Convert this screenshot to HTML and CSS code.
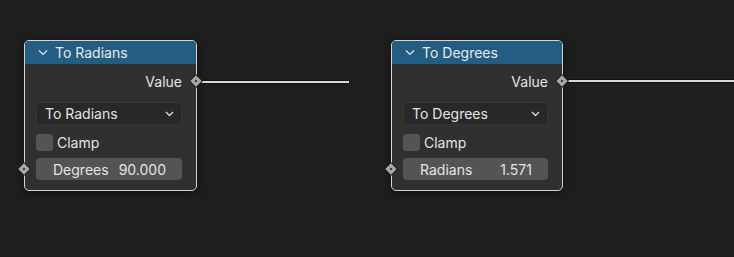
FILE: index.html
```html
<!DOCTYPE html>
<html lang="en">
<head>
    <meta charset="UTF-8">
    <title>Node Editor</title>
    <link rel="stylesheet" href="styles.css">
</head>
<body>
    <div class="canvas">
        <div class="wire wire-a"></div>
        <div class="wire wire-b"></div>

        <div class="node node-a">
            <div class="node-header">
                <svg class="chev" width="10" height="7" viewBox="0 0 10 7"><path d="M1 1.5 L5 5.5 L9 1.5" fill="none" stroke="#e6e6e6" stroke-width="1.2"/></svg>
                <span>To Radians</span>
            </div>
            <div class="node-body">
                <div class="out-row">Value<span class="socket out"></span></div>
                <div class="dropdown">
                    <span>To Radians</span>
                    <svg width="9" height="6" viewBox="0 0 9 6"><path d="M1 1 L4.5 4.5 L8 1" fill="none" stroke="#dcdcdc" stroke-width="1.3"/></svg>
                </div>
                <div class="check-row"><span class="checkbox"></span>Clamp</div>
                <div class="field"><span class="socket in"></span><span>Degrees</span><span>90.000</span></div>
            </div>
        </div>

        <div class="node node-b">
            <div class="node-header">
                <svg class="chev" width="10" height="7" viewBox="0 0 10 7"><path d="M1 1.5 L5 5.5 L9 1.5" fill="none" stroke="#e6e6e6" stroke-width="1.2"/></svg>
                <span>To Degrees</span>
            </div>
            <div class="node-body">
                <div class="out-row">Value<span class="socket out"></span></div>
                <div class="dropdown">
                    <span>To Degrees</span>
                    <svg width="9" height="6" viewBox="0 0 9 6"><path d="M1 1 L4.5 4.5 L8 1" fill="none" stroke="#dcdcdc" stroke-width="1.3"/></svg>
                </div>
                <div class="check-row"><span class="checkbox"></span>Clamp</div>
                <div class="field"><span class="socket in"></span><span>Radians</span><span>1.571</span></div>
            </div>
        </div>
    </div>
</body>
</html>
```

FILE: styles.css
```css
* {
    box-sizing: border-box;
}

body {
    margin: 0;
    background: #1d1d1d;
    font-family: Inter, "Noto Sans", sans-serif;
    font-size: 14px;
    color: #e4e4e4;
}

.canvas {
    position: relative;
    width: 734px;
    height: 257px;
    overflow: hidden;
    background-color: #1d1d1d;
    background-image: radial-gradient(circle, #242424 0.6px, transparent 0.8px);
    background-size: 4px 4px;
}

.wire {
    position: absolute;
    height: 2px;
    background: #d8d8d8;
    box-shadow: 0 0 0 1px rgba(0,0,0,0.35);
}

.wire-a { left: 197px; width: 152px; top: 81px; }
.wire-b { left: 563px; width: 171px; top: 80px; }

.node {
    position: absolute;
    top: 40px;
    height: 151px;
    background: #303030;
    border: 1px solid #d4d4d4;
    border-radius: 5px;
    box-shadow: 0 2px 6px rgba(0,0,0,0.5);
}

.node-a { left: 24px; width: 173px; }
.node-b { left: 391px; width: 172px; }

.node-header {
    height: 23px;
    background: #235e82;
    border-radius: 4px 4px 0 0;
    display: flex;
    align-items: center;
    gap: 7px;
    padding-left: 13px;
    color: #e8e8e8;
}

.node-body {
    padding: 6px 14px 0 11px;
}

.out-row {
    position: relative;
    height: 22px;
    display: flex;
    align-items: center;
    justify-content: flex-end;
}

.socket {
    position: absolute;
    z-index: 2;
    width: 8px;
    height: 8px;
    background: #a8a8a8;
    box-shadow: 0 0 0 1px #1c1c1c;
    transform: rotate(45deg);
}

.socket::after {
    content: "";
    position: absolute;
    left: 3px;
    top: 3px;
    width: 2px;
    height: 2px;
    background: #2e2e2e;
}

.out-row .socket { right: -18px; top: 7px; }

.dropdown {
    margin-top: 10px;
    height: 23px;
    background: #282828;
    border: 1px solid #363636;
    border-radius: 4px;
    display: flex;
    align-items: center;
    justify-content: space-between;
    padding: 0 7px 0 8px;
}

.check-row {
    margin-top: 9px;
    height: 17px;
    display: flex;
    align-items: center;
    gap: 4px;
}

.checkbox {
    width: 17px;
    height: 17px;
    background: #545454;
    border-radius: 3px;
}

.field {
    position: relative;
    margin-top: 7px;
    height: 22px;
    background: #545454;
    border-radius: 4px;
    display: flex;
    align-items: center;
    justify-content: space-between;
    padding: 0 16px 0 17px;
}

.field .socket { left: -16px; top: 7px; }
```
